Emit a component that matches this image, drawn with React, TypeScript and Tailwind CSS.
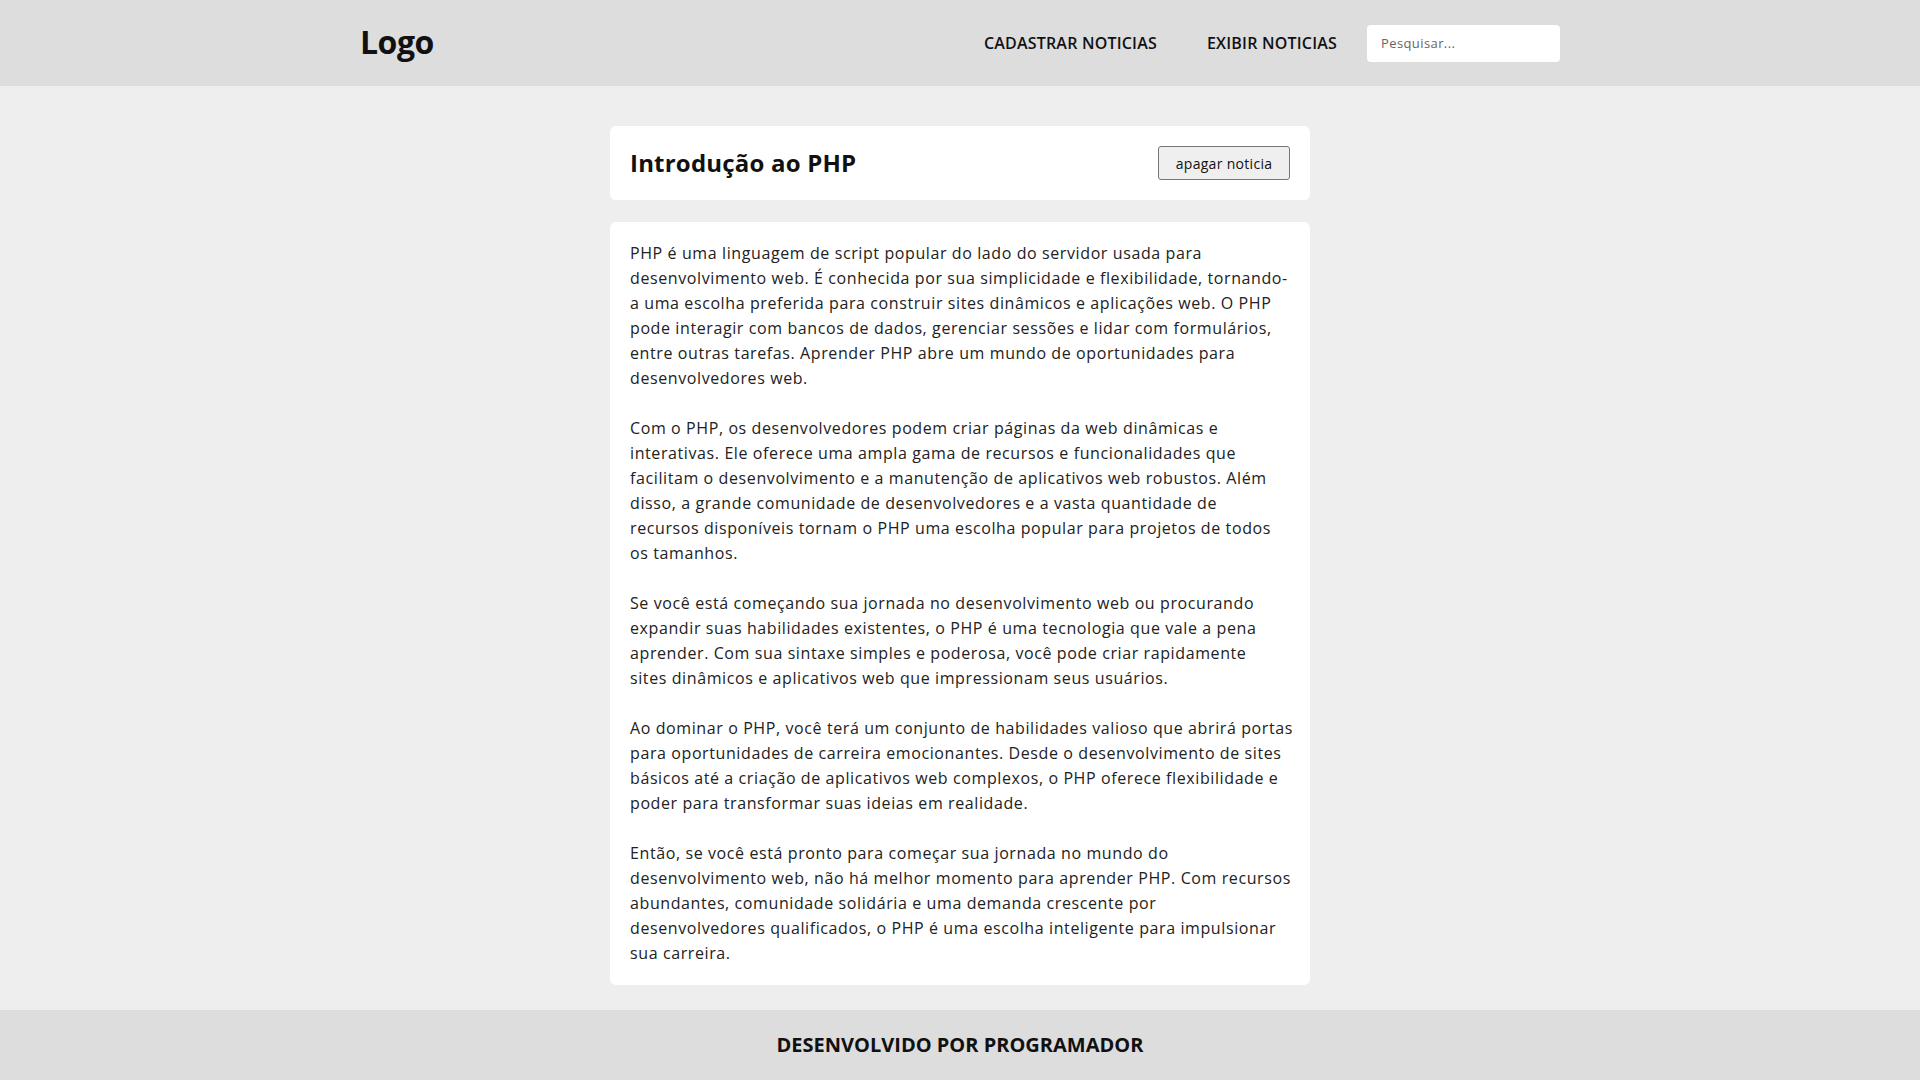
import React from "react";

const paragraphs: string[][] = [
  [
    "PHP é uma linguagem de script popular do lado do servidor usada para",
    "desenvolvimento web. É conhecida por sua simplicidade e flexibilidade, tornando-",
    "a uma escolha preferida para construir sites dinâmicos e aplicações web. O PHP",
    "pode interagir com bancos de dados, gerenciar sessões e lidar com formulários,",
    "entre outras tarefas. Aprender PHP abre um mundo de oportunidades para",
    "desenvolvedores web.",
  ],
  [
    "Com o PHP, os desenvolvedores podem criar páginas da web dinâmicas e",
    "interativas. Ele oferece uma ampla gama de recursos e funcionalidades que",
    "facilitam o desenvolvimento e a manutenção de aplicativos web robustos. Além",
    "disso, a grande comunidade de desenvolvedores e a vasta quantidade de",
    "recursos disponíveis tornam o PHP uma escolha popular para projetos de todos",
    "os tamanhos.",
  ],
  [
    "Se você está começando sua jornada no desenvolvimento web ou procurando",
    "expandir suas habilidades existentes, o PHP é uma tecnologia que vale a pena",
    "aprender. Com sua sintaxe simples e poderosa, você pode criar rapidamente",
    "sites dinâmicos e aplicativos web que impressionam seus usuários.",
  ],
  [
    "Ao dominar o PHP, você terá um conjunto de habilidades valioso que abrirá portas",
    "para oportunidades de carreira emocionantes. Desde o desenvolvimento de sites",
    "básicos até a criação de aplicativos web complexos, o PHP oferece flexibilidade e",
    "poder para transformar suas ideias em realidade.",
  ],
  [
    "Então, se você está pronto para começar sua jornada no mundo do",
    "desenvolvimento web, não há melhor momento para aprender PHP. Com recursos",
    "abundantes, comunidade solidária e uma demanda crescente por",
    "desenvolvedores qualificados, o PHP é uma escolha inteligente para impulsionar",
    "sua carreira.",
  ],
];

export default function App() {
  return (
    <div className="min-h-screen flex flex-col bg-[#eeeeee] text-[#111] font-['Open_Sans',sans-serif]">
      <header className="bg-[#dddddd] h-[86px] shrink-0">
        <div className="w-[1200px] mx-auto h-full flex items-center justify-between">
          <div className="text-[32px] font-bold tracking-[-0.5px] text-[#111] leading-none pb-[2px]">Logo</div>
          <nav className="flex items-center">
            <a className="text-[16px] font-semibold uppercase tracking-[0.2px] text-[#111] mr-[50px]">Cadastrar noticias</a>
            <a className="text-[16px] font-semibold uppercase tracking-[0.2px] text-[#111] mr-[30px]">Exibir noticias</a>
            <input
              className="w-[193px] h-[37px] bg-white rounded-[4px] px-[14px] text-[13px] tracking-[0.4px] text-[#333] placeholder:text-[#666] outline-none"
              placeholder="Pesquisar..."
            />
          </nav>
        </div>
      </header>

      <main className="flex-1 pt-10 pb-6">
        <div className="w-[700px] mx-auto flex flex-col gap-[22px]">
          <div className="bg-white rounded-[6px] px-5 h-[74px] flex items-center justify-between">
            <h1 className="text-[24px] font-bold text-[#111] tracking-[0.2px]">Introdução ao PHP</h1>
            <button className="w-[132px] h-[34px] bg-[#efefef] border border-[#767676] rounded-[3px] text-[14px] tracking-[0.3px] text-[#111]">
              apagar noticia
            </button>
          </div>
          <div className="bg-white rounded-[6px] px-5 py-[19px] text-[16px] leading-[25px] tracking-[0.6px] text-[#222]">
            {paragraphs.map((p, i) => (
              <div key={i} className={i > 0 ? "mt-[25px]" : ""}>
                {p.map((line, j) => (
                  <div key={j} className="whitespace-nowrap">{line}</div>
                ))}
              </div>
            ))}
          </div>
        </div>
      </main>

      <footer className="bg-[#dddddd] h-[70px] shrink-0 flex items-center justify-center">
        <p className="text-[20px] font-bold uppercase text-[#111]">Desenvolvido por programador</p>
      </footer>
    </div>
  );
}
